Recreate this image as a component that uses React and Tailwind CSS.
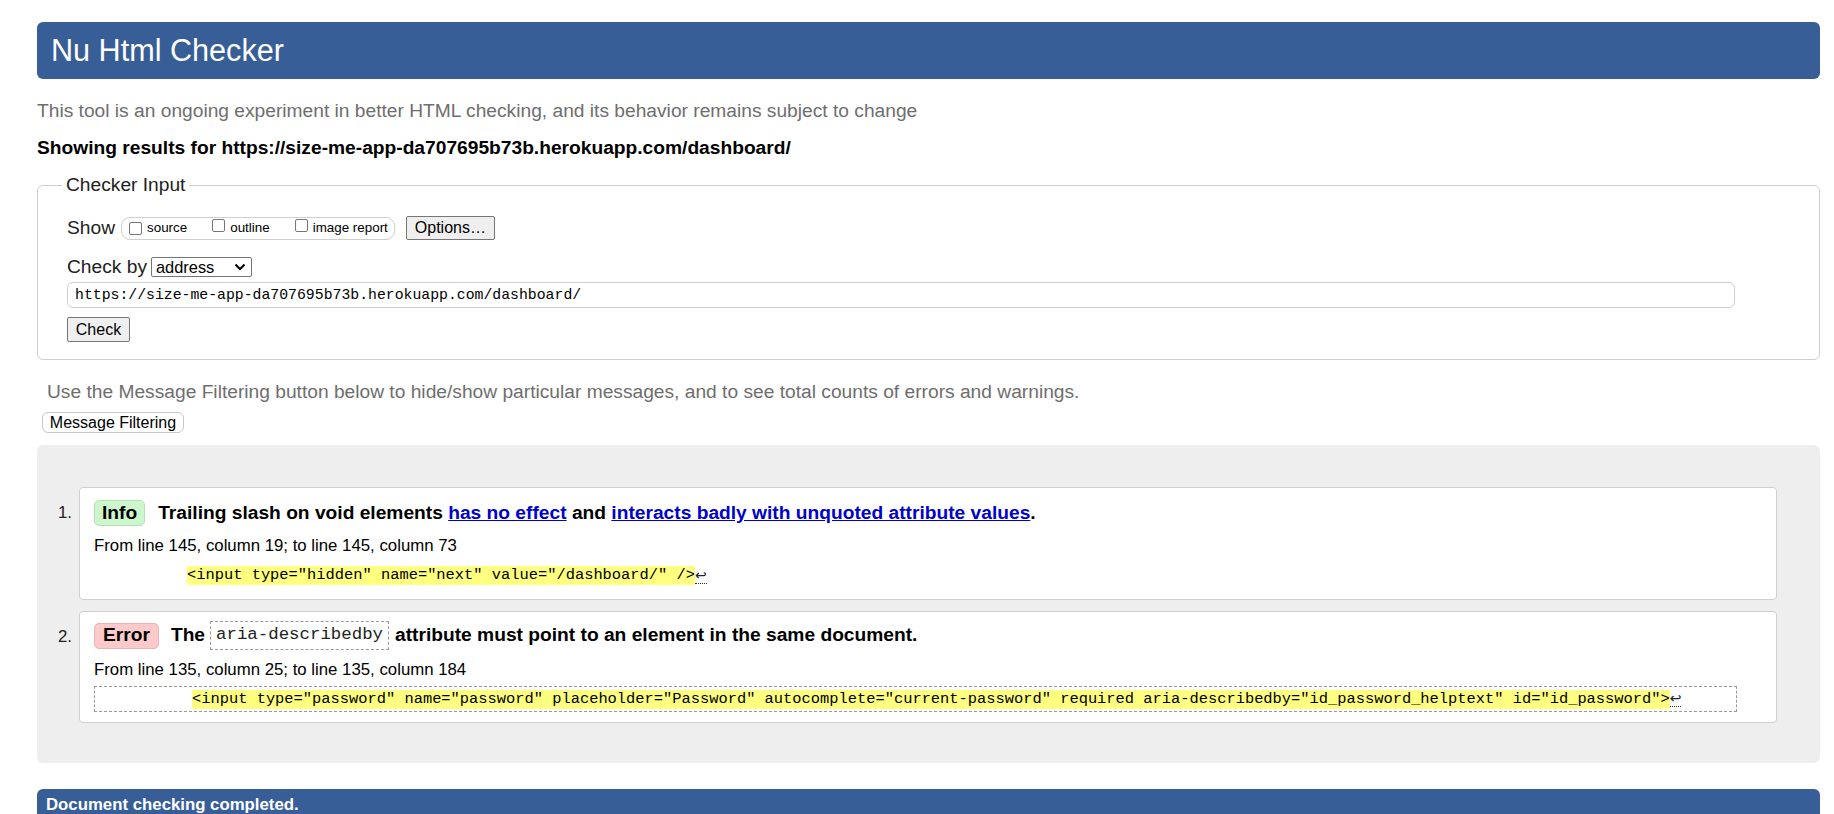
import React from "react";

function Box() {
  return <span className="inline-block w-[13px] h-[13px] border border-[#767676] rounded-[2px] bg-white shrink-0" />;
}

function Ret() {
  return (
    <span className="inline-block border-b border-dotted border-[#333] leading-[15px] text-[#223] font-['DejaVu_Sans',sans-serif] text-[14px]">↩</span>
  );
}

export default function App() {
  return (
    <div className="min-h-screen bg-white text-black pl-[37px] pr-[14px] pt-[22px] font-['Liberation_Sans',Arial,sans-serif]">
      <div className="h-[57px] bg-[#375e96] rounded-[6px] flex items-center pl-[14px] text-white text-[30.6px]">Nu Html Checker</div>

      <p className="mt-[21px] text-[19.2px] leading-[22px] text-[#6e6e6e]">
        This tool is an ongoing experiment in better HTML checking, and its behavior remains subject to change
      </p>
      <p className="mt-[15px] text-[19.2px] leading-[22px] font-bold">
        Showing results for https://size-me-app-da707695b73b.herokuapp.com/dashboard/
      </p>

      <fieldset className="mt-[15px] border border-[#cfcfcf] rounded-[6px] pl-[24px] pr-[24px] pt-[20px] pb-[17px]">
        <legend className="px-[4px] text-[19.2px] leading-[22px] text-[#222]">Checker Input</legend>
        <div className="ml-[5px]">
          <div className="h-[24px] flex items-center">
            <span className="text-[19.2px] leading-[22px] text-[#222]">Show</span>
            <div className="ml-[6px] h-[23px] flex items-center border border-[#cfcfcf] rounded-[9px] pl-[7px] pr-[6px] text-[13.4px]">
              <Box />
              <span className="ml-[5px]">source</span>
              <span className="ml-[25px]"><Box /></span>
              <span className="ml-[5px]">outline</span>
              <span className="ml-[25px]"><Box /></span>
              <span className="ml-[5px]">image report</span>
            </div>
            <div className="ml-[11px] h-[24px] w-[89px] flex items-center justify-center bg-[#efefef] border border-[#767676] rounded-[2px] text-[16px]">Options…</div>
          </div>
          <div className="mt-[17px] h-[20px] flex items-center">
            <span className="text-[19.2px] leading-[22px] text-[#222]">Check by</span>
            <div className="ml-[4px] h-[20px] w-[101px] flex items-center justify-between border border-[#767676] rounded-[2px] pl-[4px] pr-[4px] text-[16.4px]">
              <span className="leading-[18px]">address</span>
              <svg width="12" height="8" viewBox="0 0 12 8" className="mr-[1px]">
                <path d="M1.5 1.5 L6 6 L10.5 1.5" fill="none" stroke="#000" strokeWidth="2" />
              </svg>
            </div>
          </div>
          <div className="mt-[5px] h-[26px] w-[1668px] flex items-center border border-[#cfcfcf] rounded-[6px] pl-[7px] text-[14.8px] font-['Liberation_Mono',monospace]">
            https://size-me-app-da707695b73b.herokuapp.com/dashboard/
          </div>
          <div className="mt-[9px] h-[25px] w-[63px] flex items-center justify-center bg-[#efefef] border border-[#767676] rounded-[2px] text-[16px]">Check</div>
        </div>
      </fieldset>

      <p className="mt-[21px] pl-[10px] text-[19.2px] leading-[22px] text-[#6e6e6e]">
        Use the Message Filtering button below to hide/show particular messages, and to see total counts of errors and warnings.
      </p>
      <div className="mt-[9px] ml-[5px] h-[21px] w-[142px] flex items-center justify-center border border-[#c8c8c8] rounded-[6px] bg-white text-[16px]">Message Filtering</div>

      <div className="mt-[12px] bg-[#eeeeee] rounded-[6px] pt-[42px] pb-[40px] pr-[43px]">
        <ol>
          <li className="flex">
            <span className="w-[42px] shrink-0 pt-[17px] pr-[7px] text-right text-[16.8px] leading-[18px] text-[#222]">1.</span>
            <div className="flex-1 bg-white border border-[#d0d0d0] rounded-[4px] pl-[14px] pt-[12px] pb-[14px]">
              <div className="h-[26px] flex items-center">
                <span className="h-[26px] px-[7px] flex items-center justify-center bg-[#ccf7cc] border border-[#b7e0b7] rounded-[5px] text-[19.2px] font-bold">Info</span>
                <span className="ml-[13px] text-[19.2px] font-bold">
                  Trailing slash on void elements <span className="text-[#0000cc] underline">has no effect</span> and{" "}
                  <span className="text-[#0000cc] underline">interacts badly with unquoted attribute values</span>.
                </span>
              </div>
              <p className="mt-[11px] text-[16.8px] leading-[18px]">From line 145, column 19; to line 145, column 73</p>
              <div className="mt-[11px] h-[19px] flex items-center pl-[93px] text-[15.4px] font-['Liberation_Mono',monospace]">
                <span className="bg-[#ffff80] leading-[19px] whitespace-pre">{'<input type="hidden" name="next" value="/dashboard/" />'}</span>
                <Ret />
              </div>
            </div>
          </li>
          <li className="flex mt-[11px]">
            <span className="w-[42px] shrink-0 pt-[17px] pr-[7px] text-right text-[16.8px] leading-[18px] text-[#222]">2.</span>
            <div className="flex-1 bg-white border border-[#d0d0d0] rounded-[4px] pl-[14px] pt-[9px] pb-[10px]">
              <div className="h-[29px] flex items-center">
                <span className="h-[26px] px-[8px] flex items-center justify-center bg-[#fccaca] border border-[#eab4b4] rounded-[5px] text-[19.2px] font-bold">Error</span>
                <span className="ml-[12px] text-[19.2px] font-bold">The</span>
                <span className="ml-[5px] h-[29px] flex items-center border border-dashed border-[#999] px-[5px] text-[17.4px] font-['Liberation_Mono',monospace] text-[#222]">aria-describedby</span>
                <span className="ml-[6px] text-[19.2px] font-bold">attribute must point to an element in the same document.</span>
              </div>
              <p className="mt-[11px] text-[16.8px] leading-[18px]">From line 135, column 25; to line 135, column 184</p>
              <div className="mt-[7px] h-[26px] w-[1643px] flex items-center border border-dashed border-[#999] pl-[97px] text-[15.4px] font-['Liberation_Mono',monospace]">
                <span className="bg-[#ffff80] leading-[19px] whitespace-pre">{'<input type="password" name="password" placeholder="Password" autocomplete="current-password" required aria-describedby="id_password_helptext" id="id_password">'}</span>
                <Ret />
              </div>
            </div>
          </li>
        </ol>
      </div>

      <div className="mt-[26px] h-[40px] bg-[#375e96] rounded-t-[6px] pl-[9px] pt-[6px] text-white text-[16.8px] font-bold leading-[20px]">Document checking completed.</div>
    </div>
  );
}
